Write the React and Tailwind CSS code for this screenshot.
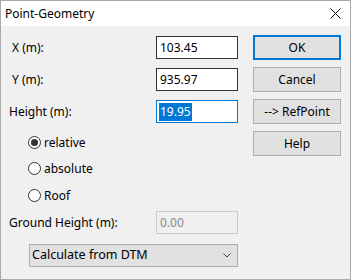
import React from 'react';

const font = { fontFamily: '"Segoe UI", "Noto Sans", "Liberation Sans", sans-serif' };

const Radio = ({ label, checked }) => (
  <div className="flex items-center h-[13px]">
    <span className="w-[13px] h-[13px] rounded-full border border-[#333333] bg-white flex items-center justify-center">
      {checked && <span className="w-[7px] h-[7px] rounded-full bg-[#333333]" />}
    </span>
    <span className="ml-[3px] text-[12px] text-black leading-none">{label}</span>
  </div>
);

const Button = ({ children, primary }) => (
  <button
    className={
      'w-[88px] h-[25px] bg-[#e1e1e1] text-[12px] text-black flex items-center justify-center ' +
      (primary ? 'border-2 border-[#0078d7]' : 'border border-[#adadad]')
    }
  >
    {children}
  </button>
);

const Field = ({ value, selected }) => (
  <div
    className={
      'w-[82px] h-[23px] bg-white flex items-center pl-[2px] text-[12px] text-black border ' +
      (selected ? 'border-[#0078d7]' : 'border-[#333333]')
    }
  >
    {selected ? <span className="bg-[#0078d7] text-white leading-[18px] px-px">{value}</span> : <span className="px-px">{value}</span>}
  </div>
);

export default function App() {
  return (
    <div className="w-[351px] h-[280px] bg-[#f0f0f0] border border-[#aaaaaa] flex flex-col overflow-hidden" style={font}>
      {/* title bar */}
      <div className="h-[25px] bg-white flex items-center justify-between pl-[4px] pr-[9px] shrink-0">
        <span className="text-[12px] text-black">Point-Geometry</span>
        <svg width="11" height="11" viewBox="0 0 11 11">
          <path d="M0.5 0.5 L10.5 10.5 M10.5 0.5 L0.5 10.5" stroke="#111" strokeWidth="1" />
        </svg>
      </div>

      <div className="flex pt-[9px]">
        {/* left column */}
        <div className="w-[237px] flex flex-col">
          <div className="flex items-center justify-between pl-[11px] h-[23px] mt-px">
            <span className="text-[12px]">X (m):</span>
            <Field value="103.45" />
          </div>
          <div className="flex items-center justify-between pl-[11px] h-[23px] mt-[9px]">
            <span className="text-[12px]">Y (m):</span>
            <Field value="935.97" />
          </div>
          <div className="flex items-center justify-between pl-[8px] h-[23px] mt-[9px]">
            <span className="text-[12px]">Height (m):</span>
            <Field value="19.95" selected />
          </div>
          <div className="flex flex-col pl-[27px] mt-[13px] gap-[12px]">
            <Radio label="relative" checked />
            <div className="mt-px"><Radio label="absolute" /></div>
            <div className="mt-[2px]"><Radio label="Roof" /></div>
          </div>
          <div className="flex items-center justify-between pl-[8px] h-[23px] mt-[9px]">
            <span className="text-[12px]">Ground Height (m):</span>
            <div className="w-[82px] h-[23px] border border-[#cccccc] flex items-center pl-[3px] text-[12px] text-[#8a8a8a]">0.00</div>
          </div>
          <div className="ml-[28px] mt-[10px] h-[23px] bg-[#e1e1e1] border border-[#adadad] flex items-center justify-between pl-[2px] pr-[6px]">
            <span className="text-[12.5px]">Calculate from DTM</span>
            <svg width="8" height="5" viewBox="0 0 8 5">
              <path d="M0.5 0.5 L4 4 L7.5 0.5" stroke="#444" strokeWidth="1" fill="none" />
            </svg>
          </div>
        </div>

        {/* right column */}
        <div className="ml-[15px] flex flex-col gap-[7px]">
          <Button primary>OK</Button>
          <Button>Cancel</Button>
          <Button>--&gt; RefPoint</Button>
          <Button>Help</Button>
        </div>
      </div>
    </div>
  );
}
